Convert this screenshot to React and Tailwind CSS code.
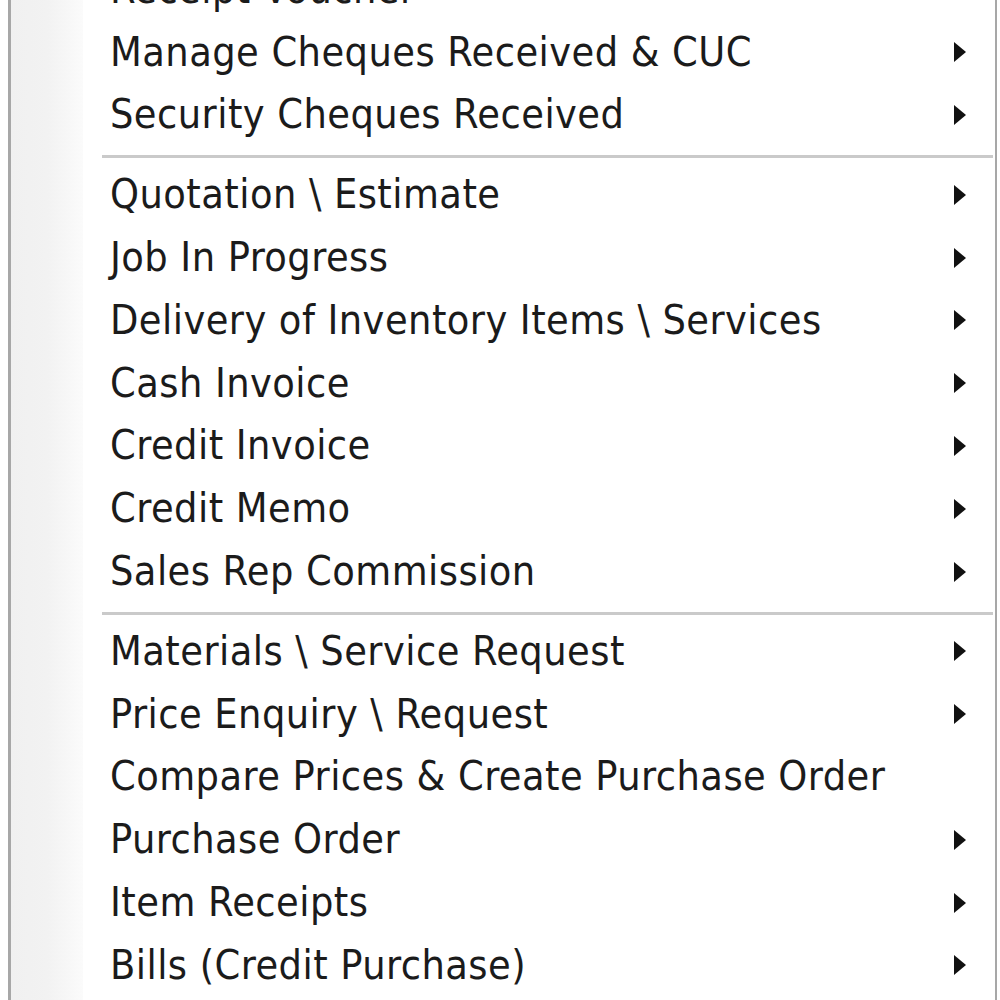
const groups = [
  [
    { label: "Receipt Voucher", sub: true },
    { label: "Manage Cheques Received & CUC", sub: true },
    { label: "Security Cheques Received", sub: true },
  ],
  [
    { label: "Quotation \\ Estimate", sub: true },
    { label: "Job In Progress", sub: true },
    { label: "Delivery of Inventory Items \\ Services", sub: true },
    { label: "Cash Invoice", sub: true },
    { label: "Credit Invoice", sub: true },
    { label: "Credit Memo", sub: true },
    { label: "Sales Rep Commission", sub: true },
  ],
  [
    { label: "Materials \\ Service Request", sub: true },
    { label: "Price Enquiry \\ Request", sub: true },
    { label: "Compare Prices & Create Purchase Order", sub: false },
    { label: "Purchase Order", sub: true },
    { label: "Item Receipts", sub: true },
    { label: "Bills (Credit Purchase)", sub: true },
  ],
];

const Arrow = () => (
  <svg width="15" height="22" viewBox="0 0 15 22" className="block">
    <path d="M2 1 L14 11 L2 21 Z" fill="#111" />
  </svg>
);

const MenuRow = ({ item }) => (
  <div className="flex items-center h-[62.8px] pl-[99px] pr-[28px]">
    <span className="flex-1 whitespace-nowrap text-[41px] tracking-[0.45px] leading-none text-[#1b1b1b]">
      {item.label}
    </span>
    {item.sub && <Arrow />}
  </div>
);

const App = () => {
  return (
    <div className="w-[1000px] h-[1000px] overflow-hidden bg-white">
      <div
        className="relative ml-[8px] w-[989px] h-[1060px] -mt-[42px] border-l-[3px] border-r-[2px] border-[#a7a7a7] bg-white"
        style={{ fontFamily: '"DejaVu Sans Condensed", "DejaVu Sans", sans-serif' }}
      >
        <div className="absolute left-0 top-0 bottom-0 w-[72px] bg-gradient-to-r from-[#f0f0f0] via-[#f2f2f2] to-[#fbfbfb]" />
        <div className="relative">
          {groups.map((g, gi) => (
            <div key={gi}>
              {gi > 0 && (
                <div className="h-[17px] pt-[9px] pl-[91px] pr-[2px]">
                  <div className="h-[3px] bg-[#cacaca]" />
                </div>
              )}
              {g.map((item) => (
                <MenuRow key={item.label} item={item} />
              ))}
            </div>
          ))}
        </div>
      </div>
    </div>
  );
};

export default App;
